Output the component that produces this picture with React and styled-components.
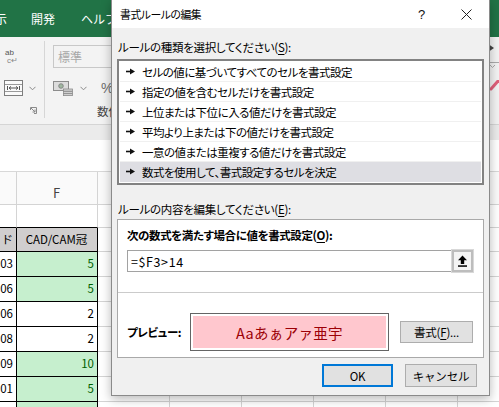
import React from 'react';
import styled, { createGlobalStyle } from 'styled-components';

const GlobalStyle = createGlobalStyle`
  html, body {
    margin: 0;
    padding: 0;
  }
  body {
    width: 499px;
    height: 407px;
    overflow: hidden;
    background: #fff;
    font-family: "Noto Sans CJK JP", "Noto Sans", sans-serif;
  }
  * {
    box-sizing: border-box;
  }
`;

const Screen = styled.div`
  position: relative;
  width: 499px;
  height: 407px;
  overflow: hidden;
  background: #fff;
`;

/* ---------- Excel behind the dialog ---------- */

const Excel = styled.div`
  display: flex;
  flex-direction: column;
  width: 100%;
  height: 100%;
`;

const TabBar = styled.div`
  height: 37px;
  flex: none;
  display: flex;
  align-items: center;
  gap: 24px;
  background: #217346;
  color: #fff;
  font-size: 12px;
  line-height: 16px;
  overflow: hidden;
`;

const Tab = styled.span`
  margin-left: ${({ $offset }) => $offset || 0}px;
  white-space: nowrap;
`;

const Ribbon = styled.div`
  height: 88px;
  flex: none;
  display: flex;
  background: #f3f3f3;
  border-bottom: 1px solid #d5d5d5;
`;

const RibbonGroup = styled.div`
  width: ${({ $w }) => $w}px;
  flex: none;
  display: flex;
  flex-direction: column;
  padding: 8px 0 0 ${({ $pl }) => $pl}px;
`;

const RibbonRow = styled.div`
  height: ${({ $h }) => $h}px;
  margin-top: ${({ $mt }) => $mt || 0}px;
  display: flex;
  align-items: center;
  gap: ${({ $gap }) => $gap || 4}px;
`;

const GroupLabel = styled.div`
  margin-top: auto;
  height: 15px;
  margin-bottom: 6px;
  display: flex;
  align-items: center;
  justify-content: ${({ $end }) => ($end ? 'flex-end' : 'flex-start')};
  padding: 0 ${({ $pr }) => $pr || 0}px 0 ${({ $pl }) => $pl || 0}px;
  font-size: 11.5px;
  color: #444;
  white-space: nowrap;
`;

const GroupDivider = styled.div`
  width: 1px;
  flex: none;
  margin: 4px 0 6px;
  background: #d6d6d6;
`;

const WrapGlyph = styled.div`
  display: flex;
  flex-direction: column;
  line-height: 8px;
  font-size: 8px;
  font-family: "Liberation Sans", sans-serif;
  color: #555;
  padding-left: 1px;
  span:last-child {
    color: #888;
    padding-left: 2px;
  }
`;

const NumberCombo = styled.div`
  width: 110px;
  height: 23px;
  border: 1px solid #c8c8c8;
  background: #f3f3f3;
  color: #a8a8a8;
  font-size: 12px;
  display: flex;
  align-items: center;
  padding-left: 4px;
`;

const Percent = styled.span`
  font-family: "Liberation Sans", sans-serif;
  font-size: 14px;
  color: #6d6d6d;
  margin-left: 8px;
`;

const RightRibbon = styled.div`
  margin-left: auto;
  width: 10px;
  flex: none;
  padding-top: 7px;
  display: flex;
  flex-direction: column;
  gap: 10px;
`;

const Band = styled.div`
  height: ${({ $h }) => $h}px;
  flex: none;
  background: ${({ $bg }) => $bg};
  border-bottom: ${({ $line }) => ($line ? '1px solid #d8d8d8' : 'none')};
`;

const Sheet = styled.div`
  flex: 1;
  display: flex;
  flex-direction: column;
  overflow: hidden;
`;

const SheetRow = styled.div`
  height: ${({ $h }) => $h}px;
  flex: none;
  display: flex;
`;

const cellBg = {
  blank: '#fff',
  colhead: '#fafafa',
  head: '#d0cece',
  green: '#c6efce',
  plain: '#fff',
};

const Cell = styled.div`
  width: ${({ $w }) => $w}px;
  flex: none;
  height: 100%;
  display: flex;
  align-items: ${({ $tone }) => ($tone === 'colhead' ? 'flex-end' : 'center')};
  justify-content: ${({ $align }) => ($align === 'center' ? 'center' : 'flex-end')};
  padding: 0 3px ${({ $tone }) => ($tone === 'colhead' ? 4 : 2)}px 2px;
  background: ${({ $tone }) => cellBg[$tone]};
  color: ${({ $tone }) => ($tone === 'green' ? '#006100' : $tone === 'colhead' ? '#444' : '#000')};
  border-right: 1px solid ${({ $table }) => ($table === 'full' ? '#000' : '#d4d4d4')};
  border-bottom: 1px solid ${({ $table }) => ($table ? '#000' : '#d4d4d4')};
  font-size: ${({ $tone }) => ($tone === 'colhead' ? 13 : 11.5)}px;
  line-height: 14px;
  white-space: nowrap;
  overflow: hidden;
`;

/* ---------- Dialog ---------- */

const Dialog = styled.div`
  position: absolute;
  left: 111px;
  top: 0;
  width: 379px;
  height: 396px;
  display: flex;
  flex-direction: column;
  background: #f0f0f0;
  border: 1px solid #8a8a8a;
  border-top: none;
  box-shadow: 0 3px 10px rgba(0, 0, 0, 0.28);
  color: #000;
  font-family: "Noto Sans CJK JP", sans-serif;
  font-size: 12px;
`;

const TitleBar = styled.div`
  height: 28px;
  flex: none;
  display: flex;
  align-items: center;
  background: #fff;
  padding-left: 8px;
`;

const Title = styled.div`
  flex: 1;
  font-size: 10.8px;
  letter-spacing: -0.4px;
  font-feature-settings: "palt";
  line-height: 16px;
`;

const TitleButton = styled.div`
  width: 45px;
  height: 28px;
  display: flex;
  align-items: center;
  justify-content: center;
  font-family: "Liberation Sans", sans-serif;
  font-size: 13px;
  color: #111;
`;

const DialogBody = styled.div`
  flex: 1;
  display: flex;
  flex-direction: column;
  padding: 0 5px;
`;

const SectionLabel = styled.div`
  margin-top: ${({ $mt }) => $mt}px;
  height: 16px;
  line-height: 16px;
  padding-left: 1px;
  font-size: 11.5px;
  letter-spacing: -0.3px;
  font-feature-settings: "palt";
  white-space: nowrap;
  u {
    text-underline-offset: 2px;
  }
`;

const RuleList = styled.div`
  margin-top: 4px;
  border: 2px solid #828282;
  background: #fff;
  padding: 1px;
`;

const RuleItem = styled.div`
  height: 20px;
  display: flex;
  align-items: center;
  gap: 7px;
  padding-left: 6px;
  background: ${({ $selected }) => ($selected ? '#dedee3' : '#fff')};
  border-bottom: 1px solid ${({ $selected }) => ($selected ? '#dedee3' : '#f0f0f0')};
  font-size: 11.5px;
  letter-spacing: -0.5px;
  font-feature-settings: "palt";
  white-space: nowrap;
  line-height: 16px;
`;

const Panel = styled.div`
  margin-top: 2px;
  height: 139px;
  display: flex;
  flex-direction: column;
  background: #fff;
  border: 1px solid #a9a9a9;
`;

const PanelTop = styled.div`
  padding: 7px 10px 0 9px;
  height: 73px;
  flex: none;
  border-bottom: 1px solid #cbcbcb;
`;

const BoldLabel = styled.div`
  font-weight: 700;
  font-size: 11.5px;
  letter-spacing: -0.4px;
  line-height: 16px;
  font-feature-settings: "palt";
  white-space: nowrap;
  u {
    text-underline-offset: 2px;
  }
`;

const FormulaInput = styled.div`
  margin-top: 7px;
  height: 22px;
  display: flex;
`;

const FormulaText = styled.div`
  flex: 1;
  border: 1px solid #a2a2a2;
  border-right: none;
  display: flex;
  align-items: center;
  padding-left: 3px;
  font-size: 12.5px;
  letter-spacing: 0.6px;
`;

const RefButton = styled.div`
  width: 21px;
  flex: none;
  display: flex;
  align-items: center;
  justify-content: center;
  background: #f4f4f4;
  border: 2px solid #bdbdbd;
  outline: 1px solid #d8d8d8;
`;

const PreviewRow = styled.div`
  flex: 1;
  display: flex;
  align-items: center;
  padding: 14px 10px 0 9px;
`;

const PreviewLabel = styled(BoldLabel)`
  width: 63px;
  flex: none;
`;

const PreviewBox = styled.div`
  width: 199px;
  height: 38px;
  flex: none;
  border: 1px solid #646464;
  padding: 2px;
  background: #fff;
`;

const PreviewFill = styled.div`
  height: 100%;
  display: flex;
  align-items: center;
  justify-content: center;
  background: #ffc7ce;
  color: #9c0006;
  font-size: 14.5px;
  letter-spacing: 0.3px;
`;

const Button = styled.div`
  width: ${({ $w }) => $w}px;
  height: ${({ $h }) => $h || 23}px;
  flex: none;
  display: flex;
  align-items: center;
  justify-content: center;
  margin-left: ${({ $ml }) => $ml || 0}px;
  background: #e1e1e1;
  border: ${({ $primary }) => ($primary ? '2px solid #0078d7' : '1px solid #adadad')};
  font-size: 11.5px;
  letter-spacing: -0.2px;
  line-height: 16px;
  white-space: nowrap;
  u {
    text-underline-offset: 2px;
  }
`;

const ButtonRow = styled.div`
  margin-top: 6px;
  display: flex;
  justify-content: flex-end;
  gap: 12px;
  padding-right: 7px;
`;

/* ---------- icons ---------- */

const Chevron = () => (
  <svg width="7" height="5" viewBox="0 0 7 5">
    <path d="M0.5 0.8l3 3 3-3" fill="none" stroke="#8a8a8a" strokeWidth="1" />
  </svg>
);

const MergeIcon = () => (
  <svg width="19" height="16" viewBox="0 0 19 16">
    <rect x="0.5" y="0.5" width="18" height="15" fill="#fafafa" stroke="#7d7d7d" />
    <path d="M1 4.5h17M1 11.5h17" stroke="#9a9a9a" />
    <path d="M3.5 6v4M15.5 6v4M5 8h9M5 8l2-1.6M5 8l2 1.6M14 8l-2-1.6M14 8l-2 1.6" fill="none" stroke="#555" />
  </svg>
);

const Launcher = () => (
  <svg width="7" height="7" viewBox="0 0 7 7">
    <path d="M0.5 3V0.5H6.5V6.5H4" fill="none" stroke="#8a8a8a" />
    <path d="M1 1l4 4M5 2.5V5H2.5" fill="none" stroke="#8a8a8a" />
  </svg>
);

const CurrencyIcon = () => (
  <svg width="21" height="16" viewBox="0 0 21 16">
    <rect x="0.5" y="1.5" width="15" height="9" fill="#dcdcdc" stroke="#8c8c8c" />
    <circle cx="8" cy="6" r="2.3" fill="#9fb7a0" stroke="#7a7a7a" strokeWidth="0.8" />
    <rect x="10.5" y="9" width="9" height="2.2" fill="#cfcfcf" stroke="#8c8c8c" strokeWidth="0.8" />
    <rect x="10.5" y="11.4" width="9" height="2.2" fill="#cfcfcf" stroke="#8c8c8c" strokeWidth="0.8" />
    <rect x="10.5" y="13.6" width="9" height="2" fill="#cfcfcf" stroke="#8c8c8c" strokeWidth="0.8" />
  </svg>
);

const RightRibbonBits = () => (
  <>
    <svg width="10" height="8" viewBox="0 0 10 8">
      <path d="M0 0.5l5 3.5-5 3.5z" fill="#444" />
    </svg>
    <svg width="10" height="8" viewBox="0 0 10 8">
      <path d="M0 0.5h10M1 3l2.5 2.5L6 3" fill="none" stroke="#aaa" />
    </svg>
    <svg width="10" height="12" viewBox="0 0 10 12">
      <path d="M9 1L2 9" stroke="#e0607a" strokeWidth="3" strokeLinecap="round" />
    </svg>
  </>
);

const ListArrow = () => (
  <svg width="9" height="7" viewBox="0 0 9 7">
    <rect x="0" y="2.7" width="4.5" height="1.6" fill="#111" />
    <path d="M4 0.4L9 3.5 4 6.6z" fill="#111" />
  </svg>
);

const CloseIcon = () => (
  <svg width="11" height="11" viewBox="0 0 11 11">
    <path d="M0.5 0.5l10 10M10.5 0.5l-10 10" stroke="#222" strokeWidth="1" />
  </svg>
);

const CollapseIcon = () => (
  <svg width="11" height="12" viewBox="0 0 11 12">
    <path d="M5.5 0.5L10 5.2H7.2V9H3.8V5.2H1z" fill="#000" />
    <rect x="1" y="10.3" width="9" height="1.5" fill="#000" />
  </svg>
);

/* ---------- data ---------- */

const rules = [
  'セルの値に基づいてすべてのセルを書式設定',
  '指定の値を含むセルだけを書式設定',
  '上位または下位に入る値だけを書式設定',
  '平均より上または下の値だけを書式設定',
  '一意の値または重複する値だけを書式設定',
  '数式を使用して、書式設定するセルを決定',
];

// e/f: text of columns E and F; eTone/fTone: cell look; table: black borders
const sheetRows = [
  { h: 33, e: '', f: 'F', eTone: 'colhead', fTone: 'colhead' },
  { h: 23, e: '', f: '', eTone: 'blank', fTone: 'blank', table: 'bottom' },
  { h: 24, e: 'ド', f: 'CAD/CAM冠', eTone: 'head', fTone: 'head', table: 'full' },
  { h: 25, e: '03', f: '5', eTone: 'plain', fTone: 'green', table: 'full' },
  { h: 25, e: '06', f: '5', eTone: 'plain', fTone: 'green', table: 'full' },
  { h: 25, e: '06', f: '2', eTone: 'plain', fTone: 'plain', table: 'full' },
  { h: 25, e: '08', f: '2', eTone: 'plain', fTone: 'plain', table: 'full' },
  { h: 25, e: '09', f: '10', eTone: 'plain', fTone: 'green', table: 'full' },
  { h: 25, e: '01', f: '5', eTone: 'plain', fTone: 'green', table: 'full' },
  { h: 25, e: '', f: '', eTone: 'plain', fTone: 'green', table: 'full' },
];

const otherCols = ['G', 'H', 'I', 'J', 'K', 'L'];

const App = () => {
  return (
    <Screen>
      <GlobalStyle />
      <Excel>
        <TabBar>
          <Tab $offset={-17}>表示</Tab>
          <Tab>開発</Tab>
          <Tab $offset={2}>ヘルプ</Tab>
        </TabBar>

        <Ribbon>
          <RibbonGroup $w={44} $pl={4}>
            <RibbonRow $h={23}>
              <WrapGlyph>
                <span>ab</span>
                <span>c↵</span>
              </WrapGlyph>
            </RibbonRow>
            <RibbonRow $h={20} $mt={10} $gap={6}>
              <MergeIcon />
              <Chevron />
            </RibbonRow>
            <GroupLabel $end $pr={7}>
              <Launcher />
            </GroupLabel>
          </RibbonGroup>
          <GroupDivider />
          <RibbonGroup $w={120} $pl={8}>
            <RibbonRow $h={23}>
              <NumberCombo>標準</NumberCombo>
            </RibbonRow>
            <RibbonRow $h={20} $mt={10} $gap={6}>
              <CurrencyIcon />
              <Chevron />
              <Percent>%</Percent>
            </RibbonRow>
            <GroupLabel $pl={44}>数値</GroupLabel>
          </RibbonGroup>
          <RightRibbon>
            <RightRibbonBits />
          </RightRibbon>
        </Ribbon>

        <Band $h={15} $bg="#ebebeb" />
        <Band $h={32} $bg="#fff" $line />

        <Sheet>
          {sheetRows.map((row, i) => (
            <SheetRow key={i} $h={row.h}>
              <Cell $w={17} $tone={row.eTone} $table={row.table}>
                {row.e}
              </Cell>
              <Cell
                $w={81}
                $tone={row.fTone}
                $table={row.table}
                $align={row.fTone === 'head' || row.fTone === 'colhead' ? 'center' : 'right'}
              >
                {row.f}
              </Cell>
              {otherCols.map((c) => (
                <Cell
                  key={c}
                  $w={72}
                  $tone={row.fTone === 'colhead' ? 'colhead' : 'blank'}
                />
              ))}
            </SheetRow>
          ))}
        </Sheet>
      </Excel>

      <Dialog>
        <TitleBar>
          <Title>書式ルールの編集</Title>
          <TitleButton>?</TitleButton>
          <TitleButton>
            <CloseIcon />
          </TitleButton>
        </TitleBar>

        <DialogBody>
          <SectionLabel $mt={11}>
            ルールの種類を選択してください(<u>S</u>):
          </SectionLabel>
          <RuleList>
            {rules.map((r, i) => (
              <RuleItem key={r} $selected={i === rules.length - 1}>
                <ListArrow />
                {r}
              </RuleItem>
            ))}
          </RuleList>

          <SectionLabel $mt={16}>
            ルールの内容を編集してください(<u>E</u>):
          </SectionLabel>
          <Panel>
            <PanelTop>
              <BoldLabel>
                次の数式を満たす場合に値を書式設定(<u>O</u>):
              </BoldLabel>
              <FormulaInput>
                <FormulaText>=$F3&gt;14</FormulaText>
                <RefButton>
                  <CollapseIcon />
                </RefButton>
              </FormulaInput>
            </PanelTop>
            <PreviewRow>
              <PreviewLabel>プレビュー:</PreviewLabel>
              <PreviewBox>
                <PreviewFill>Aaあぁアァ亜宇</PreviewFill>
              </PreviewBox>
              <Button $w={73} $h={22} $ml={11}>
                書式(<u>F</u>)...
              </Button>
            </PreviewRow>
          </Panel>

          <ButtonRow>
            <Button $w={71} $primary>
              OK
            </Button>
            <Button $w={72}>キャンセル</Button>
          </ButtonRow>
        </DialogBody>
      </Dialog>
    </Screen>
  );
};

export default App;
